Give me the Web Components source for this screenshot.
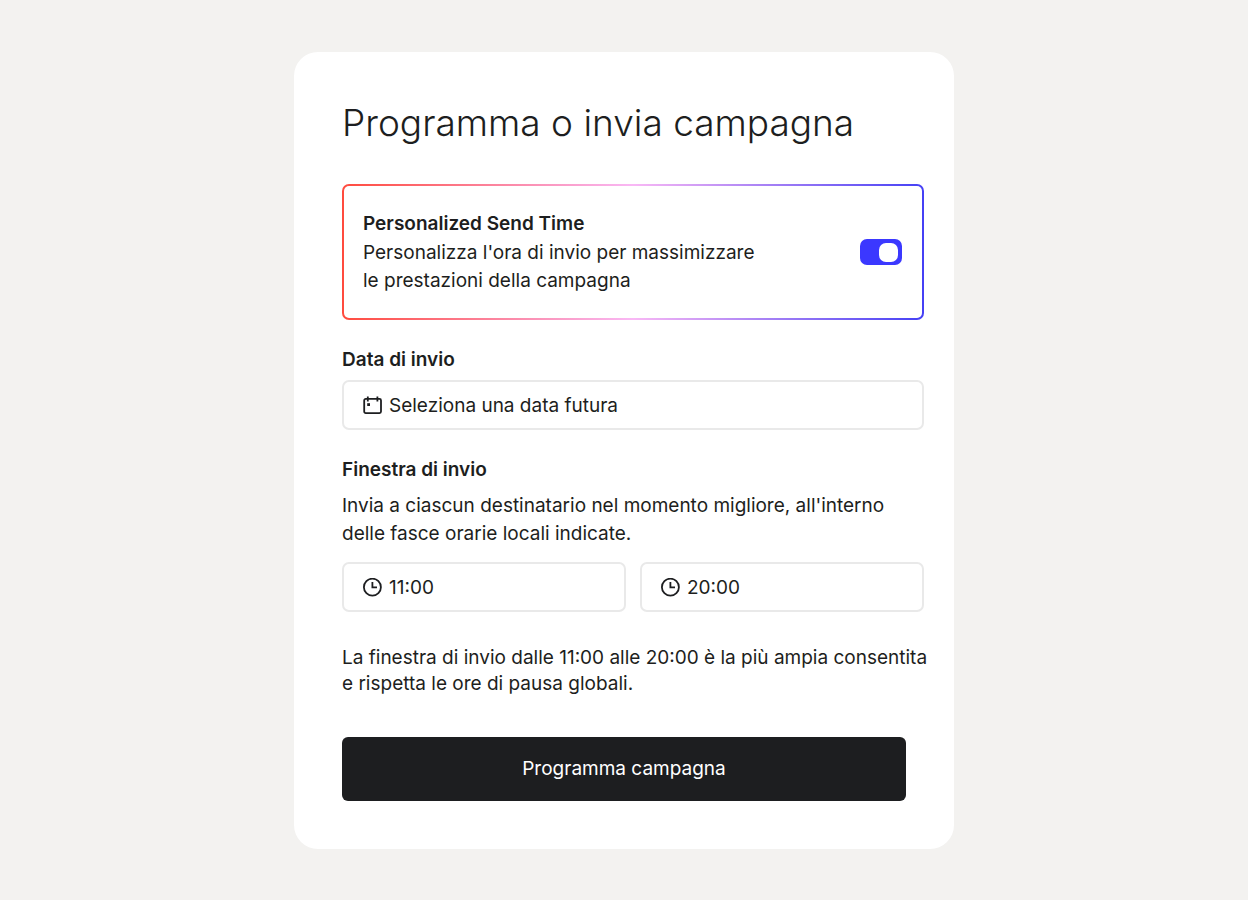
<!DOCTYPE html>
<html lang="it">
<head>
<meta charset="utf-8">
<meta name="viewport" content="width=device-width, initial-scale=1">
<title>Programma o invia campagna</title>
<style>
  body {
    margin: 0;
    padding: 52px 24px 48px;
    background: #f3f2f0;
    color: #1d1e20;
    font: 400 19px/28px Inter, "Liberation Sans", sans-serif;
    --line: #e9e9e9;
    --accent: #3b38ff;
  }
</style>
</head>
<body>
<campaign-card>
  <span slot="title">Programma o invia campagna</span>
  <feature-toggle label="Personalized Send Time">Personalizza l'ora di invio per massimizzare<br>le prestazioni della campagna</feature-toggle>
  <date-field placeholder="Seleziona una data futura">Data di invio</date-field>
  <send-window label="Finestra di invio">
    <span slot="help">Invia a ciascun destinatario nel momento migliore, all'interno<br>delle fasce orarie locali indicate.</span>
    <time-field label="Ora di inizio" value="11:00"></time-field>
    <time-field label="Ora di fine" value="20:00"></time-field>
    <span slot="note">La finestra di invio dalle 11:00 alle 20:00 è la più ampia consentita<br>e rispetta le ore di pausa globali.</span>
  </send-window>
  <action-button slot="action">Programma campagna</action-button>
</campaign-card>

<script>
const fieldStyle = `
  .field { display: flex; align-items: center; gap: 6px; box-sizing: border-box; height: 50px;
    padding: 2px 19px 0; border: 2px solid var(--line); border-radius: 7px; background: #fff; }
  .field svg { flex: none; width: 20px; height: 20px; fill: none; stroke: currentColor; stroke-width: 1.8; }
  input { flex: 1; min-width: 0; width: 100%; border: 0; padding: 0; margin: 0; outline: 0;
    background: none; color: inherit; font: inherit; }
  input::placeholder { color: inherit; opacity: 1; }
`;

function define(name, build) {
  customElements.define(name, class extends HTMLElement {
    constructor() {
      super();
      this.attachShadow({ mode: "open" });
    }
    connectedCallback() {
      this.shadowRoot.innerHTML = build(this);
    }
  });
}

define("campaign-card", () => `
  <style>
    :host { display: block; box-sizing: border-box; max-width: 660px; margin: 0 auto;
      padding: 43px 30px 48px 48px; border-radius: 24px; background: #fff; }
    h1 { margin: 0 0 33px; font-size: 37px; line-height: 56px; font-weight: 300; }
    .fields { display: flex; flex-direction: column; gap: 26px; }
    .action { margin: 40px 18px 0 0; }
  </style>
  <h1><slot name="title"></slot></h1>
  <div class="fields"><slot></slot></div>
  <div class="action"><slot name="action"></slot></div>
`);

define("feature-toggle", el => `
  <style>
    :host { display: flex; align-items: center; justify-content: space-between; gap: 24px;
      box-sizing: border-box; min-height: 136px; padding: 22px 20px 22px 19px; border: 2px solid transparent; border-radius: 7px;
      background: linear-gradient(#fff, #fff) padding-box,
        linear-gradient(90deg, #ff4b3e, #f9b8f5 50%, #4540f5) border-box; }
    label { display: block; font-weight: 600; line-height: 30px; }
    p { margin: 0; }
    input { appearance: none; flex: none; display: flex; align-items: center; justify-content: flex-end;
      box-sizing: border-box; width: 42px; height: 26px; margin: 0; padding: 0 4px;
      border-radius: 7px; background: #b9b9b9; }
    input::before { content: ""; width: 19px; height: 19px; border-radius: 7px; background: #fff; }
    input:checked { background: var(--accent); }
    input:not(:checked) { justify-content: flex-start; }
  </style>
  <div>
    <label for="toggle">${el.getAttribute("label")}</label>
    <p><slot></slot></p>
  </div>
  <input id="toggle" type="checkbox" role="switch" checked>
`);

define("date-field", el => `
  <style>
    :host { display: block; }
    label { display: block; margin-bottom: 6px; font-weight: 600; line-height: 28px; }
    ${fieldStyle}
  </style>
  <label for="date"><slot></slot></label>
  <div class="field">
    <svg viewBox="0 0 20 20" aria-hidden="true">
      <rect x="1.2" y="2.9" width="16.8" height="14.2" rx="1.5"/>
      <path d="M4.8 .6v4.8M14.4 .6v4.8"/>
      <rect x="4.2" y="7.2" width="2.8" height="2.8" fill="currentColor" stroke="none"/>
    </svg>
    <input id="date" type="text" placeholder="${el.getAttribute("placeholder")}">
  </div>
`);

define("time-field", el => `
  <style>
    :host { display: block; flex: 1; min-width: 0; }
    ${fieldStyle}
  </style>
  <div class="field">
    <svg viewBox="0 0 20 20" aria-hidden="true">
      <circle cx="9.4" cy="9.2" r="8.5"/>
      <path d="M9.4 4v5.4h4.6"/>
    </svg>
    <input type="text" aria-label="${el.getAttribute("label")}" value="${el.getAttribute("value")}">
  </div>
`);

define("send-window", el => `
  <style>
    :host { display: block; }
    h2 { margin: 0 0 8px; font-size: inherit; line-height: 28px; font-weight: 600; }
    p { margin: 0; }
    .times { display: flex; gap: 14px; margin: 14px 0 33px; }
    .note { margin-right: -16px; line-height: 26px; }
  </style>
  <div role="group" aria-labelledby="heading">
    <h2 id="heading">${el.getAttribute("label")}</h2>
    <p><slot name="help"></slot></p>
    <div class="times"><slot></slot></div>
    <p class="note"><slot name="note"></slot></p>
  </div>
`);

define("action-button", () => `
  <style>
    :host { display: block; }
    button { display: block; width: 100%; height: 64px; border: 0; border-radius: 6px;
      background: #1d1e20; color: #fff; font: inherit; cursor: pointer; }
  </style>
  <button type="button"><slot></slot></button>
`);
</script>
</body>
</html>
